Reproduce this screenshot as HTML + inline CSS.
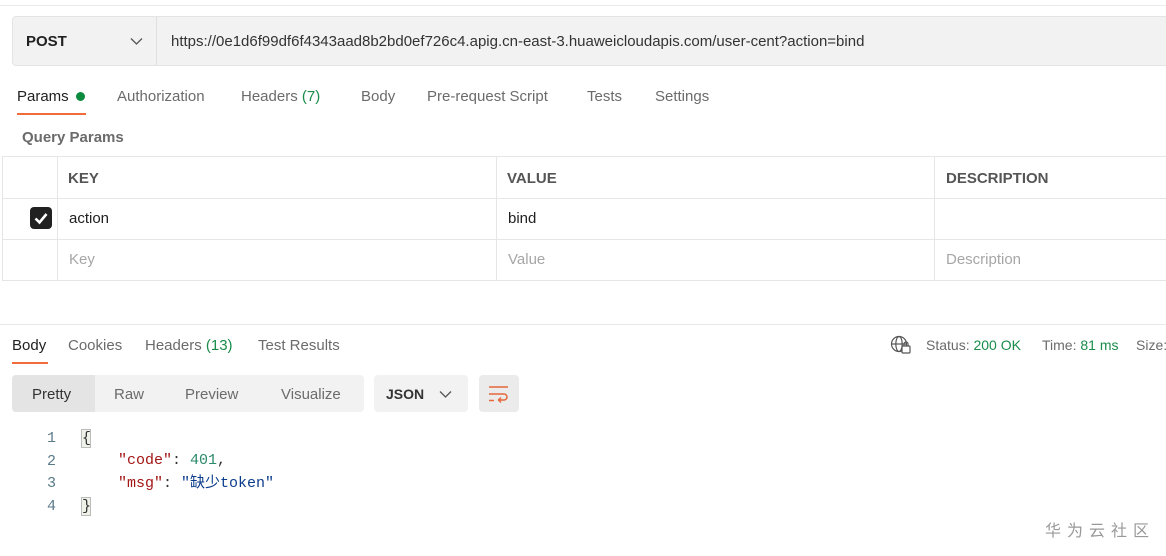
<!DOCTYPE html>
<html><head><meta charset="utf-8"><style>
*{margin:0;padding:0;box-sizing:border-box}
body{width:1166px;height:556px;background:#fff;font-family:"Liberation Sans","Noto Sans CJK SC",sans-serif;font-size:15px;color:#212121;position:relative;overflow:hidden}
.a{position:absolute;white-space:nowrap}
.t{margin-top:1px}
.g{color:#6b6b6b}
.gr{color:#1a8c4a}
.hl{position:absolute;height:1px;background:#e6e6e6}
.vl{position:absolute;width:1px;background:#e6e6e6}
.mono{font-family:"Liberation Mono","Noto Sans CJK SC",monospace;font-size:15px}
</style></head><body>
<div class="hl" style="left:0;top:5px;width:1166px;background:#ececec"></div>
<div class="a" style="left:12px;top:16px;width:1160px;height:50px;background:#f2f2f2;border:1px solid #e4e4e4;border-radius:4px"></div>
<div class="vl" style="left:156px;top:17px;height:48px;background:#e0e0e0"></div>
<div class="a t" style="left:26px;top:32px;font-weight:bold;font-size:15px;color:#212121">POST</div>
<svg class="a" style="left:130px;top:37px" width="13" height="9"><path d="M1 1.5 L6.5 7 L12 1.5" stroke="#555" stroke-width="1.3" fill="none"/></svg>
<div class="a t" style="left:171px;top:32px;color:#333">https://0e1d6f99df6f4343aad8b2bd0ef726c4.apig.cn-east-3.huaweicloudapis.com/user-cent?action=bind</div>

<div class="a t" style="left:17px;top:87px;color:#212121">Params</div>
<div class="a" style="left:76px;top:92px;width:9px;height:9px;border-radius:50%;background:#0c8a3e"></div>
<div class="a" style="left:17px;top:113px;width:69px;height:2px;background:#f26b3a"></div>
<div class="a g t" style="left:117px;top:87px">Authorization</div>
<div class="a g t" style="left:241px;top:87px">Headers <span class="gr">(7)</span></div>
<div class="a g t" style="left:361px;top:87px">Body</div>
<div class="a g t" style="left:427px;top:87px">Pre-request Script</div>
<div class="a g t" style="left:587px;top:87px">Tests</div>
<div class="a g t" style="left:655px;top:87px">Settings</div>
<div class="a t" style="left:22px;top:128px;font-weight:bold;color:#6b6b6b;font-size:15px">Query Params</div>

<div class="hl" style="left:2px;top:156px;width:1164px"></div>
<div class="hl" style="left:2px;top:198px;width:1164px"></div>
<div class="hl" style="left:2px;top:239px;width:1164px"></div>
<div class="hl" style="left:2px;top:280px;width:1164px"></div>
<div class="vl" style="left:2px;top:156px;height:125px"></div>
<div class="vl" style="left:57px;top:156px;height:125px"></div>
<div class="vl" style="left:496px;top:156px;height:125px"></div>
<div class="vl" style="left:934px;top:156px;height:125px"></div>
<div class="a t" style="left:68px;top:169px;font-weight:bold;color:#555">KEY</div>
<div class="a t" style="left:507px;top:169px;font-weight:bold;color:#555">VALUE</div>
<div class="a t" style="left:946px;top:169px;font-weight:bold;color:#555">DESCRIPTION</div>
<div class="a" style="left:30px;top:207px;width:22px;height:22px;border-radius:4px;background:#212121"></div>
<svg class="a" style="left:30px;top:207px" width="22" height="22"><path d="M5.5 11.5 L9.5 15.5 L16.5 7" stroke="#fff" stroke-width="2.6" fill="none"/></svg>
<div class="a t" style="left:69px;top:209px">action</div>
<div class="a t" style="left:508px;top:209px">bind</div>
<div class="a t" style="left:69px;top:250px;color:#a6a6a6">Key</div>
<div class="a t" style="left:508px;top:250px;color:#a6a6a6">Value</div>
<div class="a t" style="left:946px;top:250px;color:#a6a6a6">Description</div>

<div class="hl" style="left:0;top:324px;width:1166px;background:#e8e8e8"></div>
<div class="a t" style="left:12px;top:336px">Body</div>
<div class="a" style="left:12px;top:362px;width:36px;height:2px;background:#f26b3a"></div>
<div class="a g t" style="left:68px;top:336px">Cookies</div>
<div class="a g t" style="left:145px;top:336px">Headers <span class="gr">(13)</span></div>
<div class="a g t" style="left:258px;top:336px">Test Results</div>
<svg class="a" style="left:890px;top:335px" width="22" height="20" fill="none" stroke="#555" stroke-width="1.2"><circle cx="9" cy="9" r="7.5"/><ellipse cx="9" cy="9" rx="3.2" ry="7.5"/><path d="M1.5 9h15"/><rect x="12" y="11" width="8" height="7" fill="#fff" rx="1"/><path d="M14 11v-2a2 2 0 0 1 4 0v2"/></svg>
<div class="a g t" style="left:926px;top:336px;font-size:14px">Status: <span class="gr">200 OK</span></div>
<div class="a g t" style="left:1042px;top:336px;font-size:14px">Time: <span class="gr">81 ms</span></div>
<div class="a g t" style="left:1136px;top:336px;font-size:14px">Size:</div>

<div class="a" style="left:12px;top:375px;width:352px;height:37px;background:#f2f2f2;border-radius:4px"></div>
<div class="a" style="left:12px;top:375px;width:83px;height:37px;background:#e4e4e4;border-radius:4px 0 0 4px"></div>
<div class="a t" style="left:32px;top:385px;color:#333">Pretty</div>
<div class="a g t" style="left:114px;top:385px">Raw</div>
<div class="a g t" style="left:185px;top:385px">Preview</div>
<div class="a g t" style="left:281px;top:385px">Visualize</div>
<div class="a" style="left:374px;top:375px;width:94px;height:37px;background:#f2f2f2;border-radius:4px"></div>
<div class="a t" style="left:386px;top:385px;font-weight:bold;font-size:14px;color:#333">JSON</div>
<svg class="a" style="left:439px;top:390px" width="13" height="9"><path d="M1 1.5 L6.5 7 L12 1.5" stroke="#555" stroke-width="1.3" fill="none"/></svg>
<div class="a" style="left:479px;top:375px;width:40px;height:37px;background:#ebebeb;border-radius:4px"></div>
<svg class="a" style="left:488px;top:384px" width="22" height="20" fill="none" stroke="#e5673a" stroke-width="1.5"><path d="M1 3h19M1 10h15a3 3 0 0 1 0 6h-5M13 13.5l-2.5 2.5 2.5 2.5M1 16.5h5"/></svg>

<div class="a mono" style="left:47px;top:428px;color:#5a7a8a;line-height:22.5px">1<br>2<br>3<br>4</div>
<div class="a" style="left:81px;top:429px;width:10px;height:19px;border:1px solid #bbb;background:#eef2e8"></div>
<div class="a" style="left:81px;top:497px;width:10px;height:19px;border:1px solid #bbb;background:#eef2e8"></div>
<div class="a mono" style="left:82px;top:428px;line-height:22.5px;color:#333">{<br><span style="color:#fff">.</span><br><span style="color:#fff">.</span><br>}</div>
<div class="a mono" style="left:118px;top:450px;line-height:22.5px;color:#333"><span style="color:#a31515">"code"</span>: <span style="color:#2a8a6a">401</span>,<br><span style="color:#a31515">"msg"</span>: <span style="color:#0b3c8c">"缺少token"</span></div>

<div class="a" style="left:1045px;top:517px;color:#999;font-size:16px;letter-spacing:6px;font-family:'Noto Sans CJK SC',sans-serif">华为云社区</div>
</body></html>
